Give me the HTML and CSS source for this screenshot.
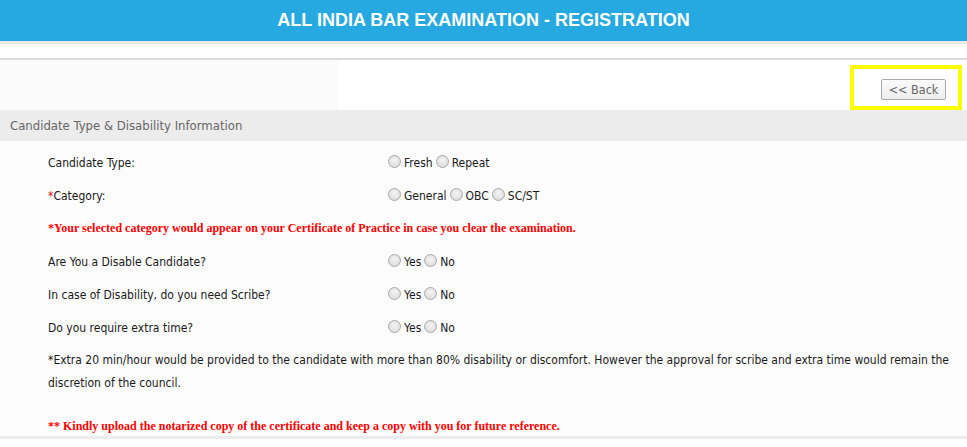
FILE: index.html
```html
<!DOCTYPE html>
<html>
<head>
<meta charset="utf-8">
<link rel="stylesheet" href="styles.css">
</head>
<body>
<header class="topbar"><h1 class="title">ALL INDIA BAR EXAMINATION - REGISTRATION</h1></header>
<div class="strip"></div>
<div class="spacer"></div>
<div class="toolbar">
  <div class="toolbar-left"></div>
  <div class="toolbar-right">
    <div class="highlight"><button class="back-btn">&lt;&lt; Back</button></div>
  </div>
</div>
<div class="section-head">Candidate Type &amp; Disability Information</div>
<div class="content">
  <div class="row">
    <div class="label">Candidate Type:</div>
    <div class="options">
      <label class="opt"><span class="radio"></span>Fresh</label>
      <label class="opt"><span class="radio"></span>Repeat</label>
    </div>
  </div>
  <div class="row">
    <div class="label"><span class="req">*</span>Category:</div>
    <div class="options">
      <label class="opt"><span class="radio"></span>General</label>
      <label class="opt"><span class="radio"></span>OBC</label>
      <label class="opt"><span class="radio"></span>SC/ST</label>
    </div>
  </div>
  <div class="row note-row">
    <div class="note">*Your selected category would appear on your Certificate of Practice in case you clear the examination.</div>
  </div>
  <div class="row">
    <div class="label">Are You a Disable Candidate?</div>
    <div class="options">
      <label class="opt"><span class="radio"></span>Yes</label>
      <label class="opt"><span class="radio"></span>No</label>
    </div>
  </div>
  <div class="row">
    <div class="label">In case of Disability, do you need Scribe?</div>
    <div class="options">
      <label class="opt"><span class="radio"></span>Yes</label>
      <label class="opt"><span class="radio"></span>No</label>
    </div>
  </div>
  <div class="row">
    <div class="label">Do you require extra time?</div>
    <div class="options">
      <label class="opt"><span class="radio"></span>Yes</label>
      <label class="opt"><span class="radio"></span>No</label>
    </div>
  </div>
  <p class="para">*Extra 20 min/hour would be provided to the candidate with more than 80% disability or discomfort. However the approval for scribe and extra time would remain the discretion of the council.</p>
  <p class="note note-bottom">** Kindly upload the notarized copy of the certificate and keep a copy with you for future reference.</p>
</div>
<div class="bottom-line"></div>
</body>
</html>
```
FILE: styles.css
```css
* { box-sizing: border-box; }
html, body { margin: 0; padding: 0; }
body {
  width: 967px;
  height: 447px;
  overflow: hidden;
  background: #ffffff;
  font-family: "DejaVu Sans Condensed", "DejaVu Sans", sans-serif;
  font-size: 12px;
  color: #1a1a1a;
}
.topbar {
  height: 41px;
  background: #26a9e0;
  display: flex;
  align-items: center;
  justify-content: center;
}
.title {
  margin: 0;
  font-family: "Liberation Sans", Arial, sans-serif;
  font-weight: bold;
  font-size: 18px;
  color: #ffffff;
  letter-spacing: 0;
}
.strip { height: 3px; background: #e8e8e8; }
.spacer { height: 16px; background: #ffffff; border-bottom: 2px solid #dddddd; }
.toolbar {
  display: flex;
  height: 50px;
}
.toolbar-left { width: 338px; background: #fbfbfb; }
.toolbar-right {
  flex: 1;
  background: #ffffff;
  display: flex;
  justify-content: flex-end;
  align-items: flex-end;
  padding-right: 5px;
}
.highlight {
  width: 112px;
  height: 45px;
  border: 4px solid #ffff00;
  display: flex;
  justify-content: flex-end;
  align-items: center;
  padding-right: 12px;
  padding-top: 4px;
}
.back-btn {
  width: 65px;
  height: 21px;
  background: linear-gradient(#fafafa, #eeeeee);
  border: 1px solid #aaaaaa;
  border-radius: 2px;
  font-family: "DejaVu Sans Condensed", "DejaVu Sans", sans-serif;
  font-size: 12.5px;
  color: #666666;
  padding: 0;
}
.section-head {
  height: 31px;
  background: #ececec;
  color: #666666;
  font-size: 13px;
  padding-left: 10px;
  display: flex;
  align-items: center;
}
.content {
  background: #fcfcfc;
  padding: 5px 0 0 48px;
  height: 295px;
}
.row {
  display: flex;
  align-items: center;
  height: 33px;
}
.label { width: 340px; }
.req { color: #e01010; }
.options { display: flex; gap: 3px; }
.opt { display: flex; align-items: center; }
.radio {
  width: 13px;
  height: 13px;
  border-radius: 50%;
  border: 1px solid #a9a9a9;
  background: radial-gradient(circle at 50% 40%, #f4f4f4, #d6d6d6);
  margin-right: 3px;
  margin-bottom: 3px;
}
.note {
  color: #ff0000;
  font-family: "Liberation Serif", "Times New Roman", serif;
  font-weight: bold;
  font-size: 12px;
}
.para {
  margin: 5px 0 0 0;
  line-height: 23px;
  padding-right: 8px;
}
.note-bottom { margin: 24px 0 0 0; }
.bottom-line { height: 3px; background: #ececec; }
```
